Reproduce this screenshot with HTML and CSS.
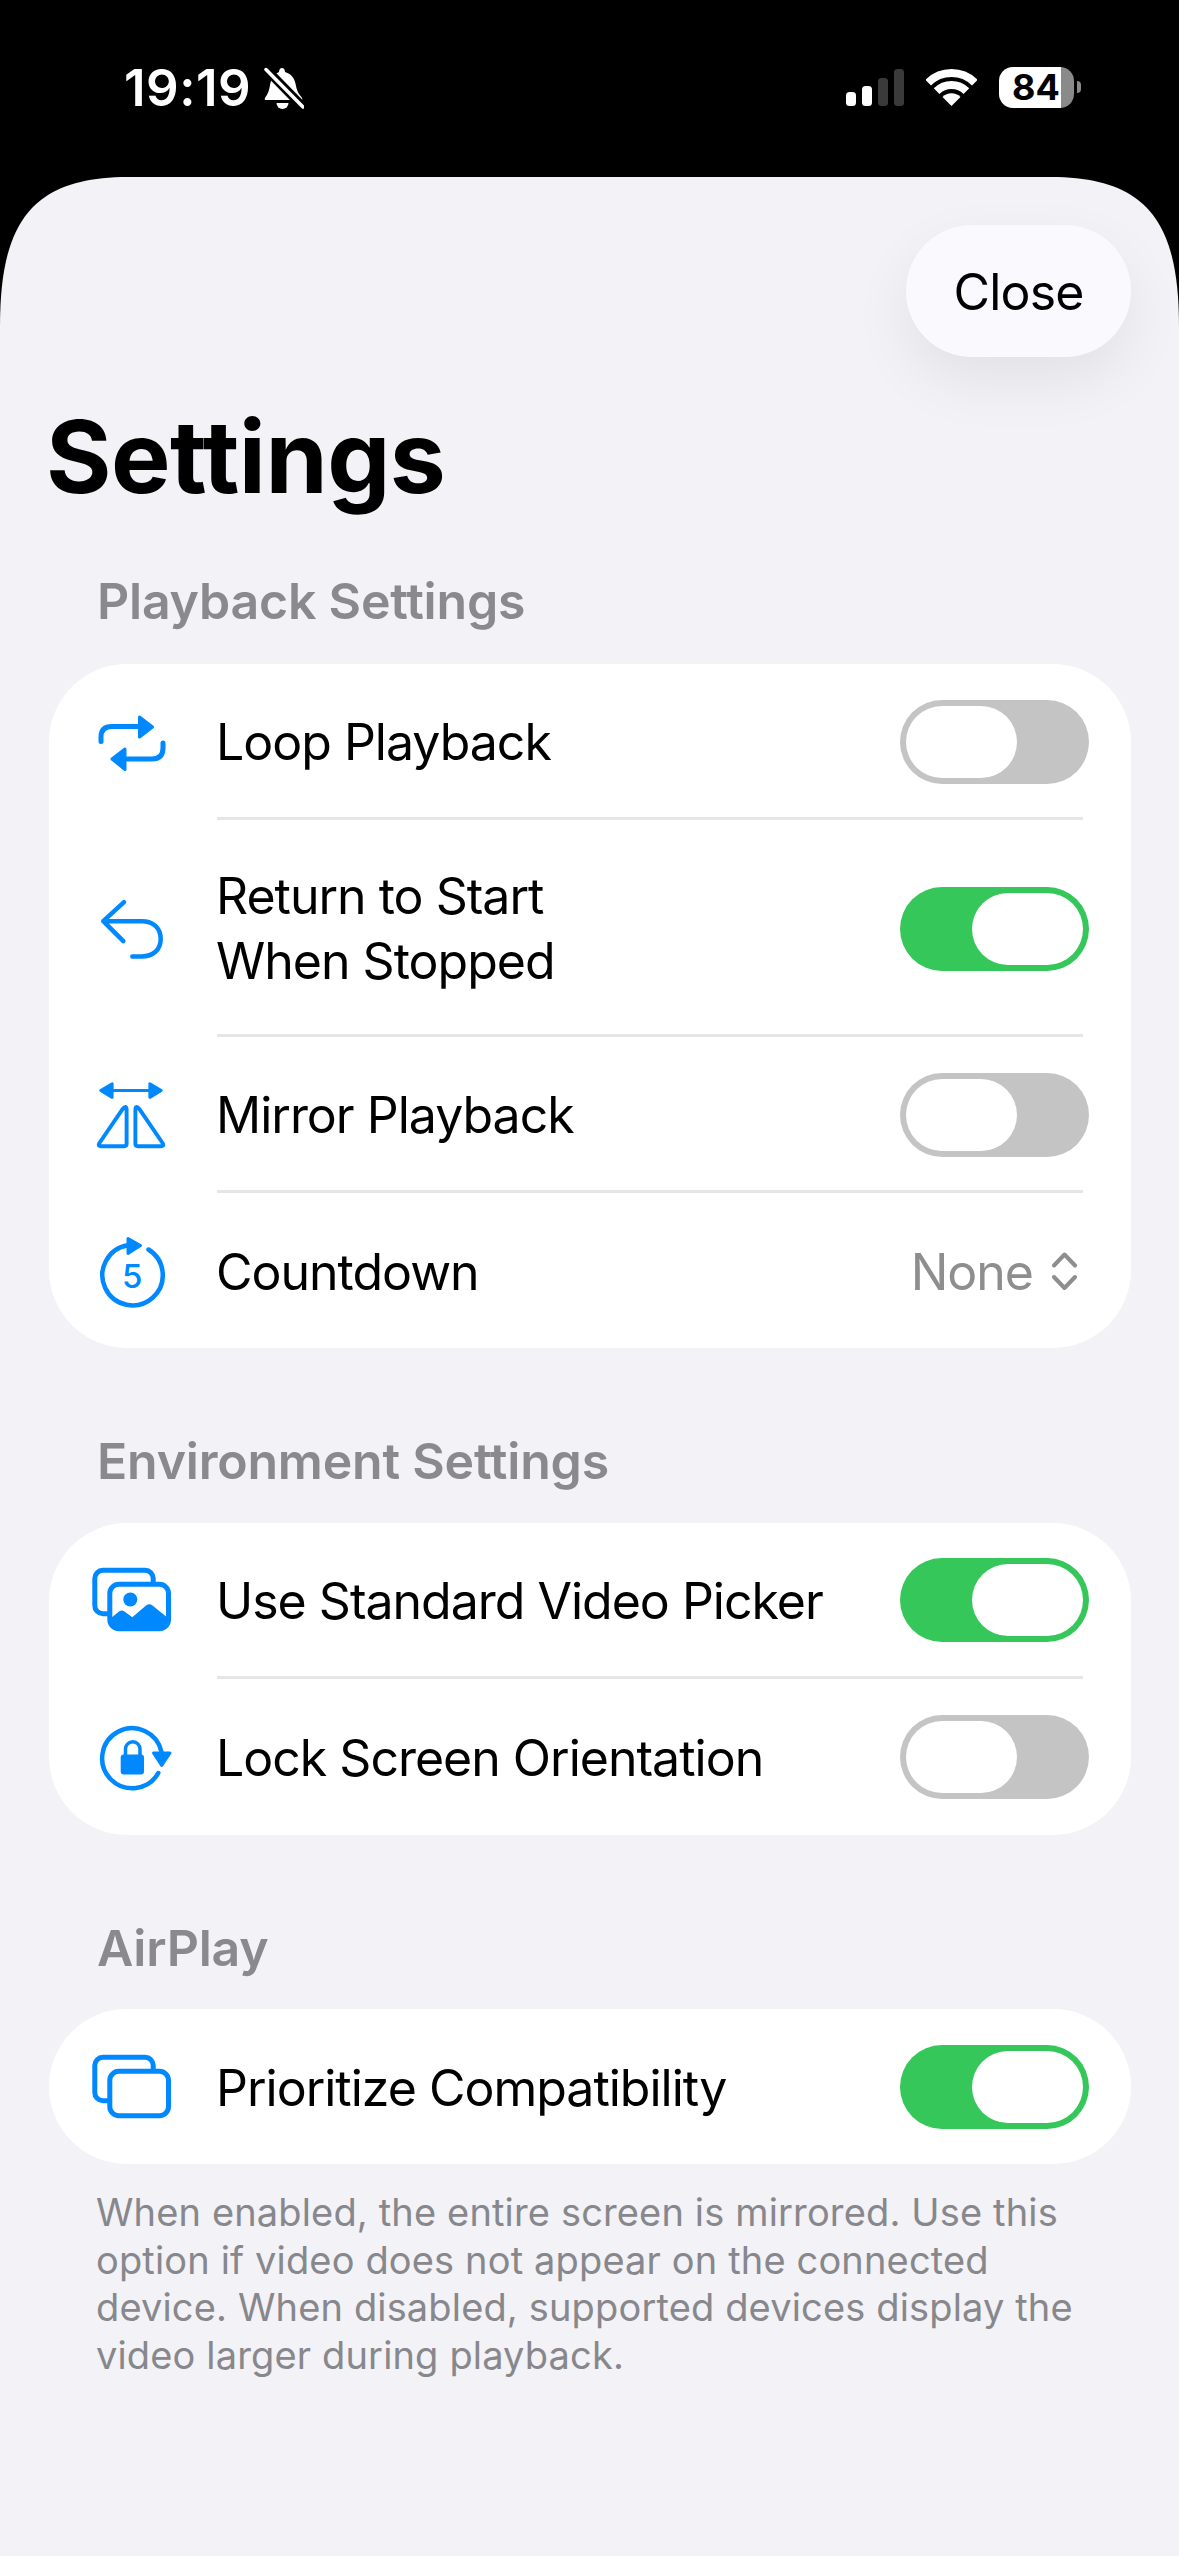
FILE: index.html
```html
<!DOCTYPE html>
<html lang="en">
<head>
<meta charset="utf-8">
<title>Settings</title>
<link rel="stylesheet" href="styles.css">
</head>
<body>
<header class="status">
  <div class="status-left">
    <span class="time">19:19</span>
    <svg class="bell" viewBox="0 0 40 43">
      <path class="white" d="M18 1C20 1 21 3 21 5C28 7 31 12 32 19C33 25 36 28 38 31Q39 33 37 33H2Q0 33 1 31C3 28 5 25 6 18C7 12 10 7 15 5C15 3 16 1 18 1Z"/>
      <path class="white" d="M12.5 36H24.5A6 6 0 0 1 12.5 36Z"/>
      <path class="slash-gap" d="M0 0L40 41"/>
      <path class="slash" d="M2 2.5L39 40"/>
    </svg>
  </div>
  <div class="status-right">
    <div class="signal">
      <span class="bar b1"></span><span class="bar b2"></span><span class="bar b3"></span><span class="bar b4"></span>
    </div>
    <svg class="wifi" viewBox="0 0 51 37">
      <path d="M2.2 13.7A33 33 0 0 1 48.8 13.7" class="wifi-arc"/>
      <path d="M10.6 22.1A21 21 0 0 1 40.4 22.1" class="wifi-arc"/>
      <path d="M25.5 37L16.5 28A12.7 12.7 0 0 1 34.5 28Z" class="white"/>
    </svg>
    <div class="battery">84</div>
    <span class="battery-nub"></span>
  </div>
</header>

<main class="sheet">
  <div class="nav"><button class="close">Close</button></div>
  <h1 class="title">Settings</h1>

  <h2 class="section first">Playback Settings</h2>
  <section class="card">
    <div class="row">
      <svg class="icon" viewBox="0 0 82 82">
        <path class="st5" d="M11 41.5V37Q11 26.5 22 26.5H50"/>
        <path class="fill" d="M49.5 17L62.5 27L49.5 37Z"/>
        <path class="st5" d="M73 43V48Q73 59 62 59H36"/>
        <path class="fill" d="M35 49L22 59L35 69.5Z"/>
      </svg>
      <span class="label">Loop Playback</span>
      <span class="toggle nudge"></span>
    </div>
    <div class="sep"></div>
    <div class="row tall">
      <svg class="icon" viewBox="0 0 82 82">
        <path class="st45" d="M34 16.2L13.3 35.2L33.3 55.2M13.3 35.2H51.7C63 35.2 70.7 42 70.7 52.9C70.7 63.8 63 70.5 51.7 70.5H42.3"/>
      </svg>
      <span class="label">Return to Start<br>When Stopped</span>
      <span class="toggle on nudge"></span>
    </div>
    <div class="sep"></div>
    <div class="row">
      <svg class="icon" viewBox="0 0 84 82">
        <path class="st3" d="M20 17H64"/>
        <path class="fill" d="M11 17L22.7 10V24Z"/>
        <path class="fill" d="M73 17L61.3 10V24Z"/>
        <path class="st4" d="M33 36.5Q37.5 31 37.5 37V71.5Q37.5 74 35 74H11Q7.5 74 9.5 71Z"/>
        <path class="st4" d="M51 36.5Q46.5 31 46.5 37V71.5Q46.5 74 49 74H73Q76.5 74 74.5 71Z"/>
      </svg>
      <span class="label">Mirror Playback</span>
      <span class="toggle nudge"></span>
    </div>
    <div class="sep"></div>
    <div class="row">
      <svg class="icon" viewBox="0 0 82 82">
        <path class="st45" d="M58.5 19.5A30.2 30.2 0 1 1 38 15.3"/>
        <path class="fill" d="M38 8.5L50.5 15.5L38 23.5Z"/>
        <text class="icon-num" x="42.3" y="57.5">5</text>
      </svg>
      <span class="label">Countdown</span>
      <span class="value">None</span>
      <svg class="updown" viewBox="0 0 25 38">
        <path d="M2 13.5L12.5 2.5L23 13.5M2 25L12.5 36L23 25"/>
      </svg>
    </div>
  </section>

  <h2 class="section">Environment Settings</h2>
  <section class="card">
    <div class="row">
      <svg class="icon" viewBox="0 0 82 82">
        <path class="st5" d="M63.2 22.8V19.3A8 8 0 0 0 55.2 11.3H12.8A8 8 0 0 0 4.8 19.3V46.7A8 8 0 0 0 12.8 54.7H17.8"/>
        <rect class="st5" x="19.8" y="25.3" width="58.7" height="44.4" rx="9"/>
        <path class="fill-plain" d="M19.8 60L29 52.5Q31.7 50.5 34.5 52.5L42.3 58.2L56 46.5Q59.3 43.8 62.5 46.5L78.5 59.5V62A9 9 0 0 1 69.5 70H28.8A9 9 0 0 1 19.8 62Z"/>
        <circle class="fill-plain" cx="40.3" cy="40.5" r="7"/>
      </svg>
      <span class="label">Use Standard Video Picker</span>
      <span class="toggle on"></span>
    </div>
    <div class="sep"></div>
    <div class="row bottom">
      <svg class="icon" viewBox="0 0 82 82">
        <path class="st45" d="M71.5 36A30 30 0 1 0 68.3 57"/>
        <path class="fill" d="M63.5 37H80L71.7 49.5Z"/>
        <rect class="fill-plain" x="30.7" y="38.5" width="23.3" height="20" rx="3"/>
        <path class="st35" d="M35.5 39V33A7.25 7.25 0 0 1 50 33V39"/>
      </svg>
      <span class="label">Lock Screen Orientation</span>
      <span class="toggle"></span>
    </div>
  </section>

  <h2 class="section tight">AirPlay</h2>
  <section class="card">
    <div class="row">
      <svg class="icon" viewBox="0 0 82 82">
        <path class="st5" d="M63.2 22.8V19.3A8 8 0 0 0 55.2 11.3H12.8A8 8 0 0 0 4.8 19.3V46.7A8 8 0 0 0 12.8 54.7H17.8"/>
        <rect class="st5" x="19.8" y="25.3" width="58.7" height="44.4" rx="9"/>
      </svg>
      <span class="label">Prioritize Compatibility</span>
      <span class="toggle on"></span>
    </div>
  </section>
  <p class="note">When enabled, the entire screen is mirrored. Use this option if video does not appear on the connected device. When disabled, supported devices display the video larger during playback.</p>
</main>
</body>
</html>
```
FILE: styles.css
```css
* { box-sizing: border-box; }
html, body { margin: 0; padding: 0; background: #000; }
body { width: 1179px; height: 2556px; overflow: hidden; font-family: Inter, "Noto Sans", sans-serif; color: #000; }

.status { height: 177px; display: flex; justify-content: space-between; align-items: flex-start; padding: 67px 98px 0 124px; }
.status-left { display: flex; align-items: flex-start; gap: 13px; }
.time { color: #fff; font-size: 51px; font-weight: 600; line-height: 41px; height: 42px; letter-spacing: 0.5px; }
.bell { width: 40px; height: 43px; display: block; }
.white { fill: #fff; }
.slash-gap { stroke: #000; stroke-width: 9; fill: none; }
.slash { stroke: #fff; stroke-width: 3.5; fill: none; stroke-linecap: round; }
.status-right { display: flex; align-items: flex-start; }
.signal { display: flex; align-items: flex-end; gap: 6px; height: 37px; margin-top: 2px; margin-right: 22px; }
.bar { width: 10px; border-radius: 3.5px; background: #3a3a3a; display: block; }
.b1 { height: 14px; background: #fff; }
.b2 { height: 20px; background: #fff; }
.b3 { height: 28px; }
.b4 { height: 37px; }
.wifi { width: 51px; height: 37px; margin-top: 2px; margin-right: 22px; display: block; }
.wifi-arc { fill: none; stroke: #fff; stroke-width: 8; }
.battery { width: 75px; height: 41px; border-radius: 14px; background: linear-gradient(90deg, #fff 62px, #8a8a8a 62px); color: #000; font-size: 36px; font-weight: 700; line-height: 41px; padding-left: 13px; }
.battery-nub { width: 4px; height: 12px; margin: 14px 0 0 3px; background: #8a8a8a; border-radius: 0 6px 6px 0; display: block; }

.sheet { height: 2379px; background: #f2f2f7; clip-path: path("M0 150C0 50 28 0 128 0H1051C1151 0 1179 50 1179 150V2379H0Z"); padding: 48px 48px 0 49px; }
.nav { display: flex; justify-content: flex-end; }
.close { width: 225px; height: 132px; border: 0; border-radius: 66px; background: #fafafe; font-family: inherit; font-size: 50px; font-weight: 400; color: #000; letter-spacing: -0.8px; padding: 2px 0 0; box-shadow: 0 24px 60px rgba(0, 0, 0, 0.07); }
.title { margin: 40px 0 56px -3px; font-size: 100px; line-height: 120px; font-weight: 700; letter-spacing: -0.5px; }
.section { margin: 85px 0 30px 48px; height: 60px; font-size: 50px; line-height: 57px; font-weight: 600; color: #8a8a8e; letter-spacing: -0.2px; }
.section.first { margin-top: 0; margin-bottom: 31px; }
.section.tight { margin-bottom: 29px; }
.card { background: #fff; border-radius: 78px; }
.row { display: flex; align-items: center; height: 153px; padding: 0 42px 0 41px; }
.row.tall { height: 214px; }
.row:last-child { height: 155px; }
.row.bottom { height: 156px; }
.sep { height: 3px; margin: 0 48px 0 168px; background: #e6e6e8; }
.icon { width: 82px; height: 82px; flex: none; margin-right: 44px; overflow: visible; }
.label { flex: 1; font-size: 50px; line-height: 65px; letter-spacing: -1px; padding-top: 3px; }
.value { font-size: 50px; line-height: 65px; color: #8e8e8e; margin-right: 19px; letter-spacing: -1px; padding-top: 3px; }
.updown { width: 25px; height: 38px; margin-right: 12px; flex: none; }
.updown path { fill: none; stroke: #8e8e8e; stroke-width: 4; stroke-linecap: round; stroke-linejoin: round; }

.st3, .st35, .st4, .st45, .st5 { fill: none; stroke: #0088ff; stroke-linecap: round; stroke-linejoin: round; }
.st3 { stroke-width: 3; }
.st35 { stroke-width: 3.5; }
.st4 { stroke-width: 4; }
.st45 { stroke-width: 4.5; }
.st5 { stroke-width: 5; }
.fill { fill: #0088ff; stroke: #0088ff; stroke-width: 3; stroke-linejoin: round; }
.fill-plain { fill: #0088ff; }
.icon-num { fill: #0088ff; font-size: 33px; font-weight: 500; text-anchor: middle; font-family: Inter, sans-serif; }

.toggle { position: relative; display: block; flex: none; width: 189px; height: 84px; border-radius: 42px; background: #c4c4c4; }
.toggle::after { content: ""; position: absolute; top: 6px; left: 6px; width: 111px; height: 72px; border-radius: 36px; background: #fff; }
.toggle.on { background: #36c75b; }
.toggle.on::after { left: 72px; }
.toggle.nudge { margin-top: 3px; }

.note { margin: 25px 30px 0 47px; font-size: 38px; line-height: 47.6px; color: #87878c; letter-spacing: 0.15px; }
```
